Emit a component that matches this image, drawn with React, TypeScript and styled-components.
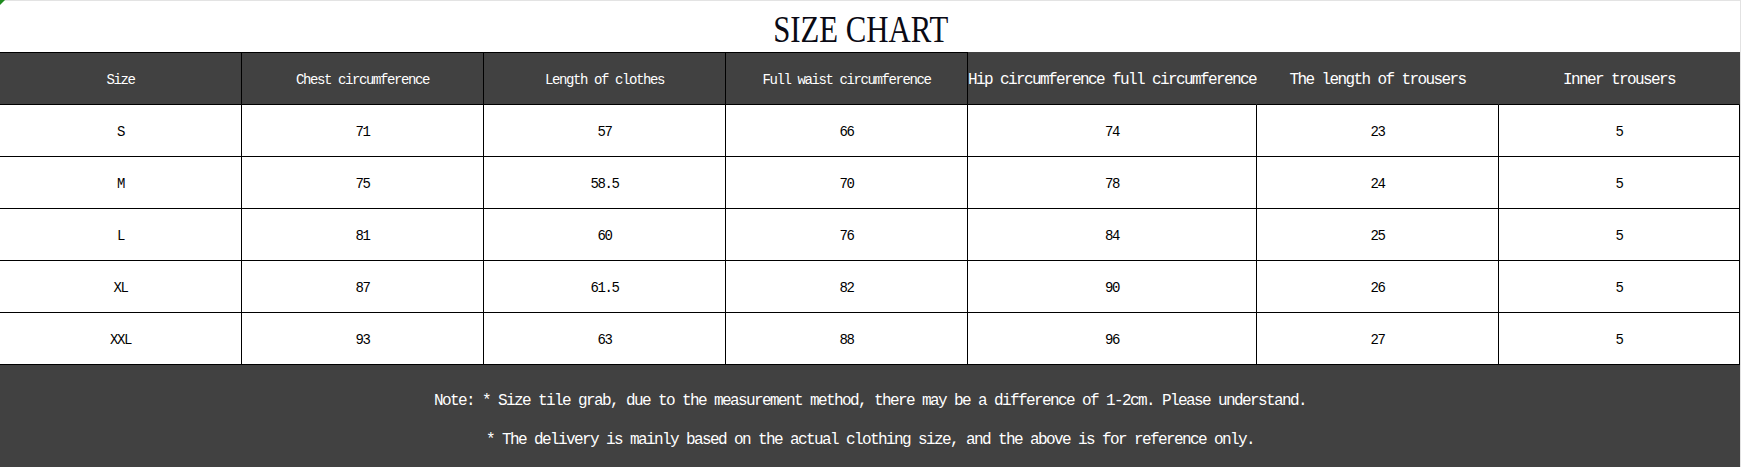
import React from "react";
import styled, { createGlobalStyle } from "styled-components";

const GlobalStyle = createGlobalStyle`
  html, body {
    margin: 0;
    padding: 0;
    background: #fff;
  }
`;

const DARK = "#414141";

const Page = styled.div`
  position: relative;
  display: flex;
  width: 1742px;
  height: 467px;
  overflow: hidden;
  background: #fff;
`;

const Corner = styled.div`
  position: absolute;
  left: 0;
  top: 0;
  width: 0;
  height: 0;
  border-top: 5px solid #1e8a1e;
  border-right: 5px solid transparent;
`;

const Sheet = styled.div`
  width: 1740px;
  display: grid;
  grid-template-columns: 242px 242px 242px 242px 289px 242px 241px;
  grid-template-rows: 52px 53px repeat(5, 52px) 1fr;
  box-sizing: border-box;
`;

const Edge = styled.div`
  width: 2px;
  border-left: 1px solid #e2e2e2;
  box-sizing: border-box;
`;

const Title = styled.div`
  grid-column: 1 / -1;
  border-top: 1px solid #e3e3e3;
  display: flex;
  align-items: flex-end;
  justify-content: center;
  padding-right: 18px;
  padding-bottom: 4px;
  box-sizing: border-box;
`;

const TitleText = styled.span`
  display: inline-block;
  font-family: "Liberation Serif", serif;
  font-size: 37.5px;
  line-height: 1;
  color: #0a0a14;
  transform: scaleX(0.82);
`;

const HeadCell = styled.div<{ $topLine: boolean; $sideLine: boolean; $big: boolean }>`
  background: ${DARK};
  color: #fff;
  display: flex;
  align-items: center;
  justify-content: center;
  white-space: nowrap;
  box-sizing: border-box;
  border-top: 1px solid ${(p) => (p.$topLine ? "#000" : DARK)};
  border-bottom: 1px solid #000;
  border-right: 1px solid ${(p) => (p.$sideLine ? "#000" : DARK)};
  font-family: "Liberation Mono", monospace;
  font-size: ${(p) => (p.$big ? "16px" : "14px")};
  letter-spacing: ${(p) => (p.$big ? "-1.6px" : "-1.4px")};
  padding-top: 3px;
`;

const Cell = styled.div`
  display: flex;
  align-items: center;
  justify-content: center;
  box-sizing: border-box;
  border-right: 1px solid #000;
  border-bottom: 1px solid #000;
  font-family: "Liberation Mono", monospace;
  font-size: 14px;
  letter-spacing: -1.4px;
  color: #000;
  padding-top: 2px;
`;

const Footer = styled.div`
  grid-column: 1 / -1;
  background: ${DARK};
  color: #fff;
  padding-top: 17px;
  font-family: "Liberation Mono", monospace;
  font-size: 16px;
  letter-spacing: -1.6px;
  line-height: 39px;
  text-align: center;
`;

const NoteLine = styled.div`
  white-space: pre;
`;

const headers = [
  { label: "Size", top: true, side: true, big: false },
  { label: "Chest circumference", top: true, side: true, big: false },
  { label: "Length of clothes", top: true, side: true, big: false },
  { label: "Full waist circumference", top: true, side: true, big: false },
  { label: "Hip circumference full circumference", top: false, side: false, big: true },
  { label: "The length of trousers", top: false, side: false, big: true },
  { label: "Inner trousers", top: false, side: false, big: true },
];

const rows = [
  ["S", "71", "57", "66", "74", "23", "5"],
  ["M", "75", "58.5", "70", "78", "24", "5"],
  ["L", "81", "60", "76", "84", "25", "5"],
  ["XL", "87", "61.5", "82", "90", "26", "5"],
  ["XXL", "93", "63", "88", "96", "27", "5"],
];

export default function App() {
  return (
    <>
      <GlobalStyle />
      <Page>
        <Corner />
        <Sheet>
          <Title>
            <TitleText>SIZE CHART</TitleText>
          </Title>
          {headers.map((h) => (
            <HeadCell key={h.label} $topLine={h.top} $sideLine={h.side} $big={h.big}>
              {h.label}
            </HeadCell>
          ))}
          {rows.map((row) =>
            row.map((value, i) => <Cell key={row[0] + i}>{value}</Cell>)
          )}
          <Footer>
            <NoteLine>Note: * Size tile grab, due to the measurement method, there may be a difference of 1-2cm. Please understand.</NoteLine>
            <NoteLine>* The delivery is mainly based on the actual clothing size, and the above is for reference only.</NoteLine>
          </Footer>
        </Sheet>
        <Edge />
      </Page>
    </>
  );
}
